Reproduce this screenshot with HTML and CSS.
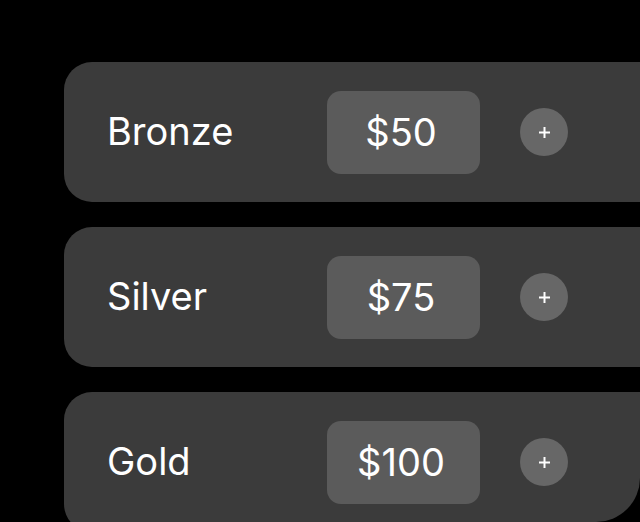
FILE: index.html
```html
<!DOCTYPE html>
<html>
<head>
<meta charset="utf-8">
<link rel="stylesheet" href="styles.css">
</head>
<body>
<div class="screen">
  <div class="list">
    <div class="card">
      <div class="label">Bronze</div>
      <div class="price">$50</div>
      <button class="add"><svg width="13" height="13" viewBox="0 0 13 13"><path d="M6.5 1v11M1 6.5h11" stroke="#fff" stroke-width="2"/></svg></button>
    </div>
    <div class="card">
      <div class="label">Silver</div>
      <div class="price">$75</div>
      <button class="add"><svg width="13" height="13" viewBox="0 0 13 13"><path d="M6.5 1v11M1 6.5h11" stroke="#fff" stroke-width="2"/></svg></button>
    </div>
    <div class="card">
      <div class="label">Gold</div>
      <div class="price">$100</div>
      <button class="add"><svg width="13" height="13" viewBox="0 0 13 13"><path d="M6.5 1v11M1 6.5h11" stroke="#fff" stroke-width="2"/></svg></button>
    </div>
  </div>
</div>
</body>
</html>
```
FILE: styles.css
```css
html, body {
  margin: 0;
  padding: 0;
  background: #000;
}
.screen {
  width: 640px;
  height: 522px;
  overflow: hidden;
  border-bottom-right-radius: 44px;
  background: #000;
}
.list {
  padding: 62px 0 0 64px;
  display: flex;
  flex-direction: column;
  gap: 25px;
}
.card {
  width: 640px;
  height: 140px;
  box-sizing: border-box;
  background: #3b3b3b;
  border-radius: 28px;
  display: flex;
  align-items: center;
  padding-left: 43px;
  font-family: Inter, "Liberation Sans", sans-serif;
  color: #fff;
}
.label {
  width: 220px;
  font-size: 38px;
  line-height: 1;
  padding-bottom: 2px;
}
.price {
  width: 153px;
  height: 83px;
  box-sizing: border-box;
  padding-right: 5px;
  border-radius: 14px;
  background: #5b5b5b;
  display: flex;
  align-items: center;
  justify-content: center;
  font-size: 38px;
}
.add {
  margin-left: 40px;
  width: 48px;
  height: 48px;
  border: none;
  border-radius: 50%;
  background: #676767;
  padding: 0;
  display: flex;
  align-items: center;
  justify-content: center;
}
.add svg {
  display: block;
}
```
